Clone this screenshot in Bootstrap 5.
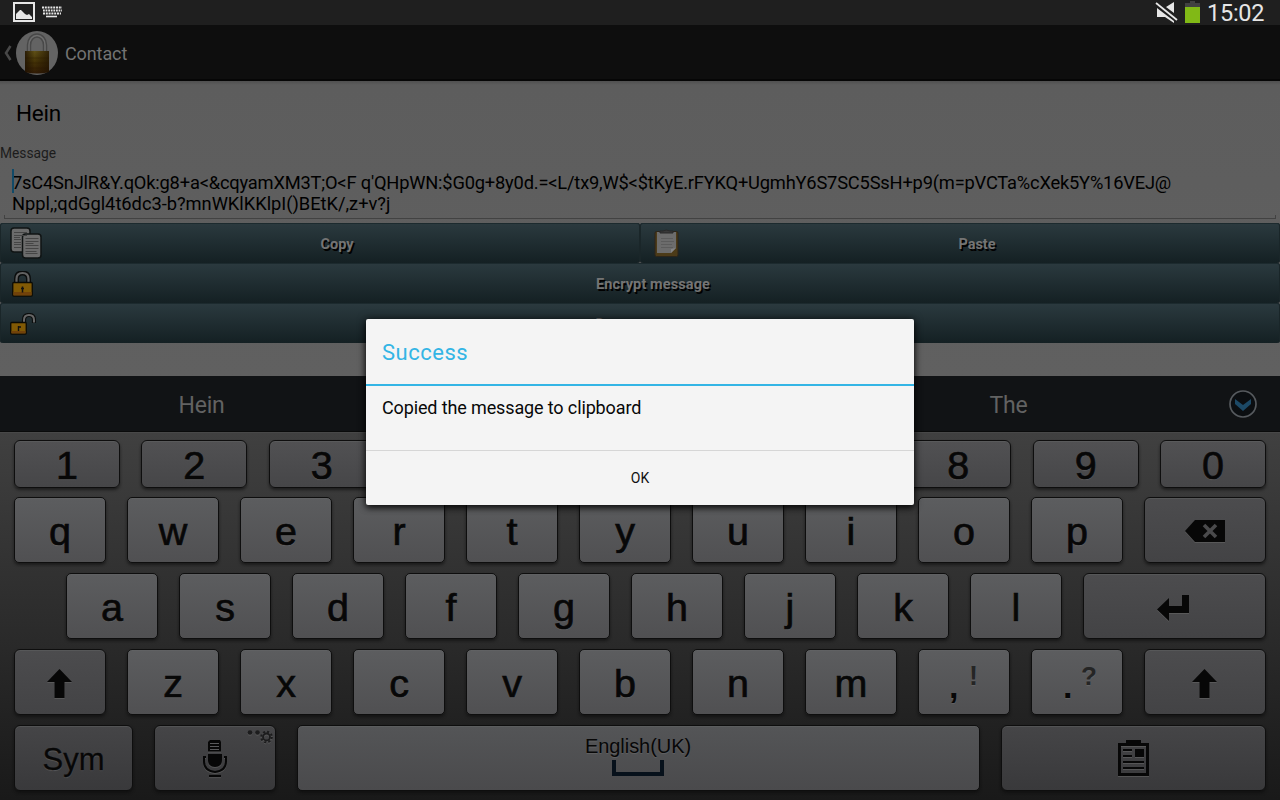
<!DOCTYPE html>
<html lang="en">
<head>
<meta charset="utf-8">
<meta name="viewport" content="width=device-width, initial-scale=1">
<title>Contact</title>
<link href="https://cdn.jsdelivr.net/npm/bootstrap@5.3.0/dist/css/bootstrap.min.css" rel="stylesheet">
<style>
body{width:1280px;height:800px;overflow:hidden;background:#5f5f5f;font-family:Roboto,sans-serif;color:#000;line-height:1}
svg{display:block;flex:none}
.statusbar{height:25px;background:#1f1f1f;color:#e6e6e6;padding:0 15px 0 13px}
.clock{font-size:23.5px;letter-spacing:-.25px;line-height:25px;width:58px;padding-top:2px;white-space:nowrap}
.battery{margin:0 7px 2px}
.picture-icon{margin-bottom:2px}
.appbar{height:56px;background:#0e0e0e;border-bottom:2px solid #060606;color:#737373;padding:2px 0 0 3px}
.appbar-title{font-size:18px;letter-spacing:-.1px;margin-left:7px;line-height:24px;padding-top:2px}
.page{height:295px;background:linear-gradient(#505050,#5d5d5d 4px,#606060)}
.contact-name{font-size:22.5px;letter-spacing:-.2px;height:64px;line-height:64px;padding-left:16px}
.msg-label{font-size:13.8px;color:#1c1c1c;height:17px;line-height:17px}
.msg-box{height:61px;padding:10px 0 0 12px;font-size:18.3px;line-height:21px;white-space:nowrap}
.msg-box .line-a{letter-spacing:-.19px}
.msg-box .line-b{letter-spacing:-.02px}
.msg-box .rule{left:4px;right:4px;bottom:4px;height:4px;border:1px solid #424242;border-top:0}
.caret{left:12px;top:7px;width:2px;height:24px;background:#114a68}
.act{height:40px;border:0;border-radius:3px;background:linear-gradient(#2b3a3f,#142023);box-shadow:inset 0 1px #1c2a2e,inset 1px 0 #1a2629,inset -1px 0 #1a2629;color:#747474;font-size:14.5px;font-weight:700;text-shadow:1.5px 1.5px 0 #000;padding:4px 0 0 34px}
.act.wide{padding-left:26px;letter-spacing:.1px}
.act .lead-icon{left:10px;top:0;height:40px}
.act.wide .lead-icon{top:1px}
.suggest{height:56px;background:#111315;border-bottom:1px solid #0a0b0b;color:#626262;font-size:23px}
.sug{width:403px;padding-top:4px;letter-spacing:-.2px}
.keyboard{height:368px;background:linear-gradient(#404040,#191919);border-top:1px solid #484848;padding:7px 14px 0;font-family:"Liberation Sans",sans-serif}
.krow{gap:21px;height:66px;margin-bottom:10px}
.krow.digits{gap:0;height:48px;margin-bottom:9px}
.home-row{padding-left:52px}
.key{width:92px;height:100%;flex:none;border:1px solid #0e0e0e;border-radius:5px;background:linear-gradient(#5c5d5f,#505052);box-shadow:inset 0 1px #66686a66,0 2px 3px #0b0b0b99;color:#070707;font-size:39.5px;-webkit-text-stroke:.7px #070707;text-shadow:0 1px 1px #7777;line-height:1;padding-top:3px}
.digits .key{width:106px;background:linear-gradient(#515153,#464648);border-radius:6px}
.key.fn{background:linear-gradient(#4c4c4e,#434345);border-radius:6px;padding:2px 1px 0 0}
.bottom .key{background:linear-gradient(#545557,#4a4a4c)}
.bottom .key.fn{background:linear-gradient(#454547,#39393b)}
.key svg{filter:drop-shadow(0 1px 0 #6669)}
.low{width:10px;margin:16px 10px 0 6px;font-weight:700;font-size:34px;-webkit-text-stroke:0}
.hint{width:16px;margin-top:10px;color:#252525;font-weight:700;font-size:27px;-webkit-text-stroke:0}
.hint.query{margin-left:-2px;font-size:26px}
.key.sym{width:119px;font-size:31px;-webkit-text-stroke:.3px #070707;padding:2px 0 0}
.key.mic{width:122px;padding:2px 0 0}
.hint-gear{right:1px;top:2px}
.key.space{width:683px;font-size:20px;letter-spacing:-.05px;-webkit-text-stroke:0;padding:10px 1px 0 0}
.space span{line-height:20px;margin-bottom:4px}
.space svg{filter:none}
.dialog{left:366px;top:319px;width:548px;height:186px;background:#f4f4f4;border-radius:2px;box-shadow:0 3px 6px #000b,0 0 8px #0008;color:#080808}
.dialog-title{height:67px;border-bottom:2px solid #33b5e5;color:#33b5e5;font-size:22px;letter-spacing:.5px;padding-left:16px;line-height:67px}
.dialog-text{height:65px;border-bottom:1px solid #d6d6d6;font-size:18px;letter-spacing:-.13px;padding:11px 16px;line-height:21px}
.dialog-ok{height:54px;font-size:14px;background:none;border:0;color:#111}
</style>
</head>
<body>
<header>
  <div class="statusbar d-flex align-items-center">
    <svg class="picture-icon" width="22" height="20" viewBox="0 0 22 20"><path d="M1 1h20v18H1z" fill="none" stroke="#e6e6e6" stroke-width="2"/><path d="M3 17v-5l4-4h1l4 4 2 1 2-1 3 3v2z" fill="#e6e6e6"/></svg>
    <svg width="27" height="13" viewBox="-7 0 27 13" fill="none" stroke="#e6e6e6" stroke-width="2"><path d="M0 1.500h20M1 7.500h18" stroke-dasharray="2 .8"/><path d="M1 4.500h19" stroke-dasharray="1.800 .8"/><path d="M4 10.500h11" stroke-width="1.600"/></svg>
    <div class="d-flex ms-auto align-items-center">
      <svg width="23" height="23" viewBox="0 0 23 23"><path d="M2 7v9h8l9 6v-2zM11 6l8-5v11z" fill="#e6e6e6"/><path d="M1 2l21 17" stroke="#1f1f1f" stroke-width="4"/><path d="M1 2l21 17" stroke="#e6e6e6" stroke-width="1.800"/></svg>
      <svg class="battery" width="15" height="22" viewBox="0 0 15 22"><path d="M0 2h5V0h5v2h5v4H0z" fill="#414141"/><path d="M0 6h15v16H0z" fill="#81b916"/></svg>
      <div class="clock">15:02</div>
    </div>
  </div>
  <div class="appbar d-flex align-items-center">
    <svg width="9" height="16" viewBox="0 0 9 16"><path d="M7.500 1L3 8l4.500 7" fill="none" stroke="#484848" stroke-width="2.500"/></svg>
    <svg class="ms-1" width="42" height="44" viewBox="0 0 42 44">
      <defs><linearGradient id="brass" x2="0" y2="1"><stop stop-color="#605117"/><stop offset=".45" stop-color="#463507"/><stop offset="1" stop-color="#301a04"/></linearGradient>
      <linearGradient id="brassEdge"><stop stop-color="#1d1002" stop-opacity=".8"/><stop offset=".4" stop-color="#1d1002" stop-opacity="0"/><stop offset="1" stop-color="#1d1002" stop-opacity=".7"/></linearGradient></defs>
      <ellipse cx="21" cy="22" rx="21" ry="22" fill="#636363"/>
      <path d="M13 21V14a8 9.500 0 0 1 16 0v7" fill="none" stroke="#484848" stroke-width="4.500"/><path d="M13 21V14a8 9.500 0 0 1 16 0v7" fill="none" stroke="#6e6e6e" stroke-width="1.500"/>
      <path d="M9 20h24v21q-12 3-24 0z" fill="url(#brass)"/><path d="M9 20h24v21q-12 3-24 0z" fill="url(#brassEdge)"/><path d="M9 27h24M9 32h24M9 37h24" stroke="#271602" stroke-opacity=".35"/>
    </svg>
    <div class="appbar-title">Contact</div>
  </div>
</header>
<main class="page">
  <div class="contact-name">Hein</div>
  <div class="msg-label">Message</div>
  <div class="msg-box position-relative"><span class="line-a">7sC4SnJlR&amp;Y.qOk:g8+a&lt;&amp;cqyamXM3T;O&lt;F q'QHpWN:$G0g+8y0d.=&lt;L/tx9,W$&lt;$tKyE.rFYKQ+UgmhY6S7SC5SsH+p9(m=pVCTa%cXek5Y%16VEJ@</span><br><span class="line-b">Nppl,;qdGgl4t6dc3-b?mnWKlKKlpI()BEtK/,z+v?j</span>
    <div class="caret position-absolute"></div><div class="rule position-absolute"></div>
  </div>
  <div class="d-flex">
    <button class="act w-50 position-relative">
      <span class="lead-icon position-absolute d-flex align-items-center"><svg width="32" height="32" viewBox="0 0 32 32"><g fill="#6c6c6c" stroke="#101414" stroke-width="1.500"><rect x="1" y="1" width="19" height="24" rx="3"/><rect x="12.500" y="7" width="18.500" height="24" rx="3"/></g><g stroke="#454545"><path d="M4 5.500h13M4 8.500h13M4 10.500h6M4 12.500h7M4 15.500h7M4 17.500h7M4 20.500h7"/><path d="M15.500 11.500h13M15.500 14.500h13M15.500 16.500h8M15.500 18.500h13M15.500 21.500h13M15.500 24.500h11M15.500 26.500h12"/></g></svg></span>Copy</button>
    <button class="act w-50 position-relative">
      <span class="lead-icon position-absolute d-flex align-items-center ps-1"><svg width="25" height="28" viewBox="0 0 25 28"><rect x="1" y="2.500" width="23" height="25" rx="1.500" fill="#4c3b18" stroke="#2c251a"/><path d="M3 3h19v16l-5 5H3z" fill="#6c6c6c"/><path d="M17 24v-4l5-1z" fill="#858585"/><path d="M6 4V2h3q3-2 7 0h3v2z" fill="#393939" stroke="#292929"/><path d="M7 9.500h12M7 12.500h13M7 15.500h11M7 18.500h12" stroke="#5c5c5c"/></svg></span>Paste</button>
  </div>
  <button class="act wide w-100 position-relative d-block">
    <span class="lead-icon position-absolute d-flex align-items-center"><svg width="23" height="26" viewBox="-2 0 23 26"><path d="M4.500 12V8q0-6 6-6t6 6v4" fill="none" stroke="#0b0d0d" stroke-width="5"/><path d="M4.500 12V8q0-6 6-6t6 6v4" fill="none" stroke="#626262" stroke-width="2.200"/><rect x=".75" y="11.500" width="19.500" height="13.500" rx="1" fill="#815a05" stroke="#0b0b05" stroke-width="1.300"/><path d="M1.500 21h18v3.500h-18z" fill="#71420a"/><path d="M10.500 15.500v6M9 17.500h3" stroke="#111" stroke-width="1.500"/></svg></span>Encrypt message</button>
  <button class="act wide w-100 position-relative d-block">
    <span class="lead-icon position-absolute d-flex align-items-center"><svg width="26" height="22" viewBox="0 0 26 22"><path d="M14 10V7q0-5 5-5t5 5v3" fill="none" stroke="#0b0d0d" stroke-width="4.200"/><path d="M14 10V7q0-5 5-5t5 5v2.500" fill="none" stroke="#676767" stroke-width="2"/><rect x=".75" y="9.500" width="15.500" height="11.500" rx="1" fill="#815a05" stroke="#0b0b05" stroke-width="1.300"/><path d="M1.500 18h14v2.500h-14z" fill="#71420a"/><path d="M8.500 13v5M8 14h3" stroke="#111" stroke-width="1.400"/></svg></span>Decrypt message</button>
</main>
<section>
  <div class="suggest d-flex align-items-center">
    <div class="text-center sug">Hein</div><div class="flex-fill"></div><div class="text-center sug">The</div>
    <svg width="70" height="28" viewBox="-19 0 70 28"><circle cx="14" cy="14" r="13" fill="#0b0e11" stroke="#565a5e" stroke-width="1.700"/><path d="M6 9l8 6 8-6v5l-8 7-8-7z" fill="#1c4966"/></svg>
  </div>
  <div class="keyboard">
    <div class="krow digits d-flex justify-content-between">
      <div class="key d-flex align-items-center justify-content-center">1</div><div class="key d-flex align-items-center justify-content-center">2</div><div class="key d-flex align-items-center justify-content-center">3</div><div class="key d-flex align-items-center justify-content-center">4</div><div class="key d-flex align-items-center justify-content-center">5</div><div class="key d-flex align-items-center justify-content-center">6</div><div class="key d-flex align-items-center justify-content-center">7</div><div class="key d-flex align-items-center justify-content-center">8</div><div class="key d-flex align-items-center justify-content-center">9</div><div class="key d-flex align-items-center justify-content-center">0</div>
    </div>
    <div class="krow d-flex">
      <div class="key d-flex align-items-center justify-content-center">q</div><div class="key d-flex align-items-center justify-content-center">w</div><div class="key d-flex align-items-center justify-content-center">e</div><div class="key d-flex align-items-center justify-content-center">r</div><div class="key d-flex align-items-center justify-content-center">t</div><div class="key d-flex align-items-center justify-content-center">y</div><div class="key d-flex align-items-center justify-content-center">u</div><div class="key d-flex align-items-center justify-content-center">i</div><div class="key d-flex align-items-center justify-content-center">o</div><div class="key d-flex align-items-center justify-content-center">p</div>
      <div class="key fn flex-fill d-flex align-items-center justify-content-center"><svg width="40" height="22" viewBox="0 0 40 22"><path d="M0 11L10 0h30v22H10z" fill="#070707"/><path d="M19 5l12 12M31 5L19 17" stroke="#4a4a4c" stroke-width="3.600"/></svg></div>
    </div>
    <div class="krow home-row d-flex">
      <div class="key d-flex align-items-center justify-content-center">a</div><div class="key d-flex align-items-center justify-content-center">s</div><div class="key d-flex align-items-center justify-content-center">d</div><div class="key d-flex align-items-center justify-content-center">f</div><div class="key d-flex align-items-center justify-content-center">g</div><div class="key d-flex align-items-center justify-content-center">h</div><div class="key d-flex align-items-center justify-content-center">j</div><div class="key d-flex align-items-center justify-content-center">k</div><div class="key d-flex align-items-center justify-content-center">l</div>
      <div class="key fn flex-fill d-flex align-items-center justify-content-center"><svg width="34" height="28" viewBox="0 -2 34 28"><path d="M0 14.500L12 3v8h13V0h7v18H12v8z" fill="#070707"/></svg></div>
    </div>
    <div class="krow d-flex">
      <div class="key fn d-flex align-items-center justify-content-center"><svg width="25" height="29" viewBox="0 0 25 29"><path d="M12.500 0L25 13h-7.500v16h-10V13H0z" fill="#070707"/></svg></div>
      <div class="key d-flex align-items-center justify-content-center">z</div><div class="key d-flex align-items-center justify-content-center">x</div><div class="key d-flex align-items-center justify-content-center">c</div><div class="key d-flex align-items-center justify-content-center">v</div><div class="key d-flex align-items-center justify-content-center">b</div><div class="key d-flex align-items-center justify-content-center">n</div><div class="key d-flex align-items-center justify-content-center">m</div>
      <div class="key d-flex justify-content-center"><span class="low">,</span><span class="hint">!</span></div>
      <div class="key d-flex justify-content-center"><span class="low">.</span><span class="hint query">?</span></div>
      <div class="key fn flex-fill d-flex align-items-center justify-content-center"><svg width="25" height="29" viewBox="0 0 25 29"><path d="M12.500 0L25 13h-7.500v16h-10V13H0z" fill="#070707"/></svg></div>
    </div>
    <div class="krow bottom d-flex">
      <div class="key fn sym d-flex align-items-center justify-content-center">Sym</div>
      <div class="key fn mic d-flex align-items-center justify-content-center position-relative">
        <svg width="26" height="38" viewBox="0 0 26 38"><path d="M8 0h10l1 2v9.500H6V2z" fill="#070707"/><path d="M8 3.500h9M8 6.500h9M8 9.500h9" stroke="#59595b" stroke-width="1.200"/><path d="M6 14h14v6q0 7-7 7t-7-7z" fill="#070707"/><path d="M4 17H2v4q0 10 11 11 11-1 11-11v-4h-2" fill="none" stroke="#070707" stroke-width="2"/><path d="M7 36h12" stroke="#070707" stroke-width="2.200"/></svg>
        <svg class="hint-gear position-absolute" width="27" height="16" viewBox="0 0 27 16"><circle cx="3" cy="4.500" r="2.300" fill="#1c1c1d"/><circle cx="10.500" cy="4.500" r="2.300" fill="#1c1c1d"/><circle cx="19.500" cy="9" r="3.500" fill="none" stroke="#1c1c1d" stroke-width="1.800"/><circle cx="19.500" cy="9" r="5.300" fill="none" stroke="#1c1c1d" stroke-width="2" stroke-dasharray="2.080 2.080"/></svg>
      </div>
      <div class="key space d-flex flex-column align-items-center"><span>English(UK)</span><svg width="52" height="16" viewBox="0 0 52 16"><path d="M2 0v14h48V0" fill="none" stroke="#07111b" stroke-width="4"/></svg></div>
      <div class="key fn flex-fill d-flex align-items-center justify-content-center"><svg width="31" height="38" viewBox="0 1 31 38"><path d="M8 1h15v4H8z" fill="#070707"/><path d="M1.500 5.500h28v30h-28z" fill="none" stroke="#070707" stroke-width="3"/><path d="M5 11h9M5 17h9M5 23h21M5 29h21" stroke="#070707" stroke-width="2"/><path d="M17 10h9v8h-9z" fill="#070707"/></svg></div>
    </div>
  </div>
</section>
<div class="dialog position-absolute" role="dialog">
  <div class="dialog-title">Success</div>
  <div class="dialog-text">Copied the message to clipboard</div>
  <button class="dialog-ok w-100">OK</button>
</div>
<script src="https://cdn.jsdelivr.net/npm/bootstrap@5.3.0/dist/js/bootstrap.bundle.min.js"></script>
</body>
</html>
